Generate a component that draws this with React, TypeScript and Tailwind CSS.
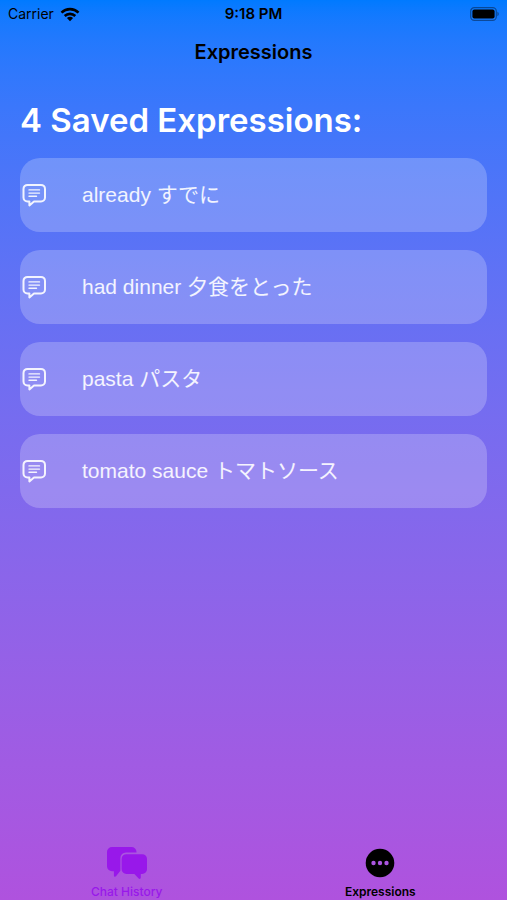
const expressions = [
  "already すでに",
  "had dinner 夕食をとった",
  "pasta パスタ",
  "tomato sauce トマトソース",
];

function WifiIcon() {
  return (
    <svg viewBox="0 0 20 15" className="h-[15px] w-5" aria-hidden="true">
      <g fill="none" stroke="currentColor" strokeWidth="2.6">
        <path d="M1.5 5.6a12.2 12.2 0 0 1 17 0" />
        <path d="M4.7 9a7.6 7.6 0 0 1 10.6 0" />
      </g>
      <path d="M10 14.2 6.9 11.1a4.5 4.5 0 0 1 6.2 0Z" fill="currentColor" />
    </svg>
  );
}

function BatteryIcon() {
  return (
    <svg viewBox="0 0 30 14" className="h-[14px] w-[30px]" aria-hidden="true">
      <rect x="1.7" y="0.7" width="25.6" height="12.6" rx="3.6" fill="none" stroke="currentColor" strokeOpacity="0.4" strokeWidth="1.2" />
      <rect x="3.4" y="2.4" width="22.2" height="9.2" rx="2" fill="currentColor" />
      <path d="M28.4 4.8c1.8.7 1.8 3.7 0 4.4Z" fill="currentColor" fillOpacity="0.4" />
    </svg>
  );
}

function MessageIcon() {
  return (
    <svg viewBox="0 0 26 24" className="h-6 w-[26px] shrink-0" fill="none" stroke="currentColor" strokeLinecap="round" strokeLinejoin="round" aria-hidden="true">
      <path strokeWidth="2" d="M6.5 1.9H20a4 4 0 0 1 4 4v8.6a4 4 0 0 1-4 4h-7l-4.600 3.900v-3.900H6.500a4 4 0 0 1-4-4V5.900a4 4 0 0 1 4-4Z" />
      <path strokeWidth="1.4" d="M8 6.900h10.500M8 10.100h10.500M8 13.300h7.500" />
    </svg>
  );
}

function ChatIcon() {
  return (
    <svg viewBox="0 0 42 34" className="h-[34px] w-[42px]" fill="currentColor" aria-hidden="true">
      <path d="M6 1h19.500a5 5 0 0 1 5 5v.4H20a5.600 5.600 0 0 0-5.600 5.600v12.800L10 30.200c-.8.900-2.100.5-2.100-.8v-4.100H6a5 5 0 0 1-5-5V6a5 5 0 0 1 5-5Z" />
      <path d="M20.400 8.200h15.800a4.800 4.800 0 0 1 4.800 4.800v10.200a4.800 4.800 0 0 1-4.800 4.800h-1.400v3.600c0 1.300-1.200 1.700-2.100.8L28.400 28h-8a4.800 4.800 0 0 1-4.800-4.800V13a4.800 4.800 0 0 1 4.800-4.800Z" />
    </svg>
  );
}

function EllipsisIcon() {
  return (
    <svg viewBox="0 0 30 30" className="size-[30px]" aria-hidden="true">
      <circle cx="15" cy="15" r="14.3" fill="currentColor" />
      <g className="fill-[#ab55e0]">
        <circle cx="8.5" cy="15" r="2.2" />
        <circle cx="15" cy="15" r="2.2" />
        <circle cx="21.5" cy="15" r="2.2" />
      </g>
    </svg>
  );
}

export default function App() {
  return (
    <div className="flex min-h-screen flex-col bg-linear-to-b from-[#007aff] to-[#af52de] font-['Inter','Noto_Sans_CJK_JP',sans-serif] text-black">
      <header>
        <div className="grid h-7 grid-cols-3 items-center px-2 text-sm">
          <div className="flex items-center gap-1.5">
            <span>Carrier</span>
            <WifiIcon />
          </div>
          <span className="text-center text-[15px] font-semibold">9:18 PM</span>
          <div className="flex justify-end">
            <BatteryIcon />
          </div>
        </div>
        <div className="flex h-12 items-center justify-center text-xl font-semibold">Expressions</div>
      </header>

      <main className="flex-1 px-5 pt-6">
        <h1 className="text-[33px] leading-10 font-semibold text-white">4 Saved Expressions:</h1>
        <ul className="mt-[18px] flex flex-col gap-[18px]">
          {expressions.map((text) => (
            <li
              key={text}
              className="flex h-[74px] items-center gap-[35px] rounded-[20px] bg-white/22 pl-px font-['Liberation_Sans','Noto_Sans_CJK_JP',sans-serif] text-[21px] text-white/90"
            >
              <MessageIcon />
              <span>{text}</span>
            </li>
          ))}
        </ul>
      </main>

      <nav className="grid grid-cols-2 text-xs">
        <button type="button" className="flex flex-col items-center font-medium text-[#9818ea]">
          <ChatIcon />
          <span className="mt-1">Chat History</span>
        </button>
        <button type="button" className="flex flex-col items-center font-semibold" aria-current="page">
          <span className="flex h-[34px] items-center">
            <EllipsisIcon />
          </span>
          <span className="mt-1">Expressions</span>
        </button>
      </nav>
    </div>
  );
}
